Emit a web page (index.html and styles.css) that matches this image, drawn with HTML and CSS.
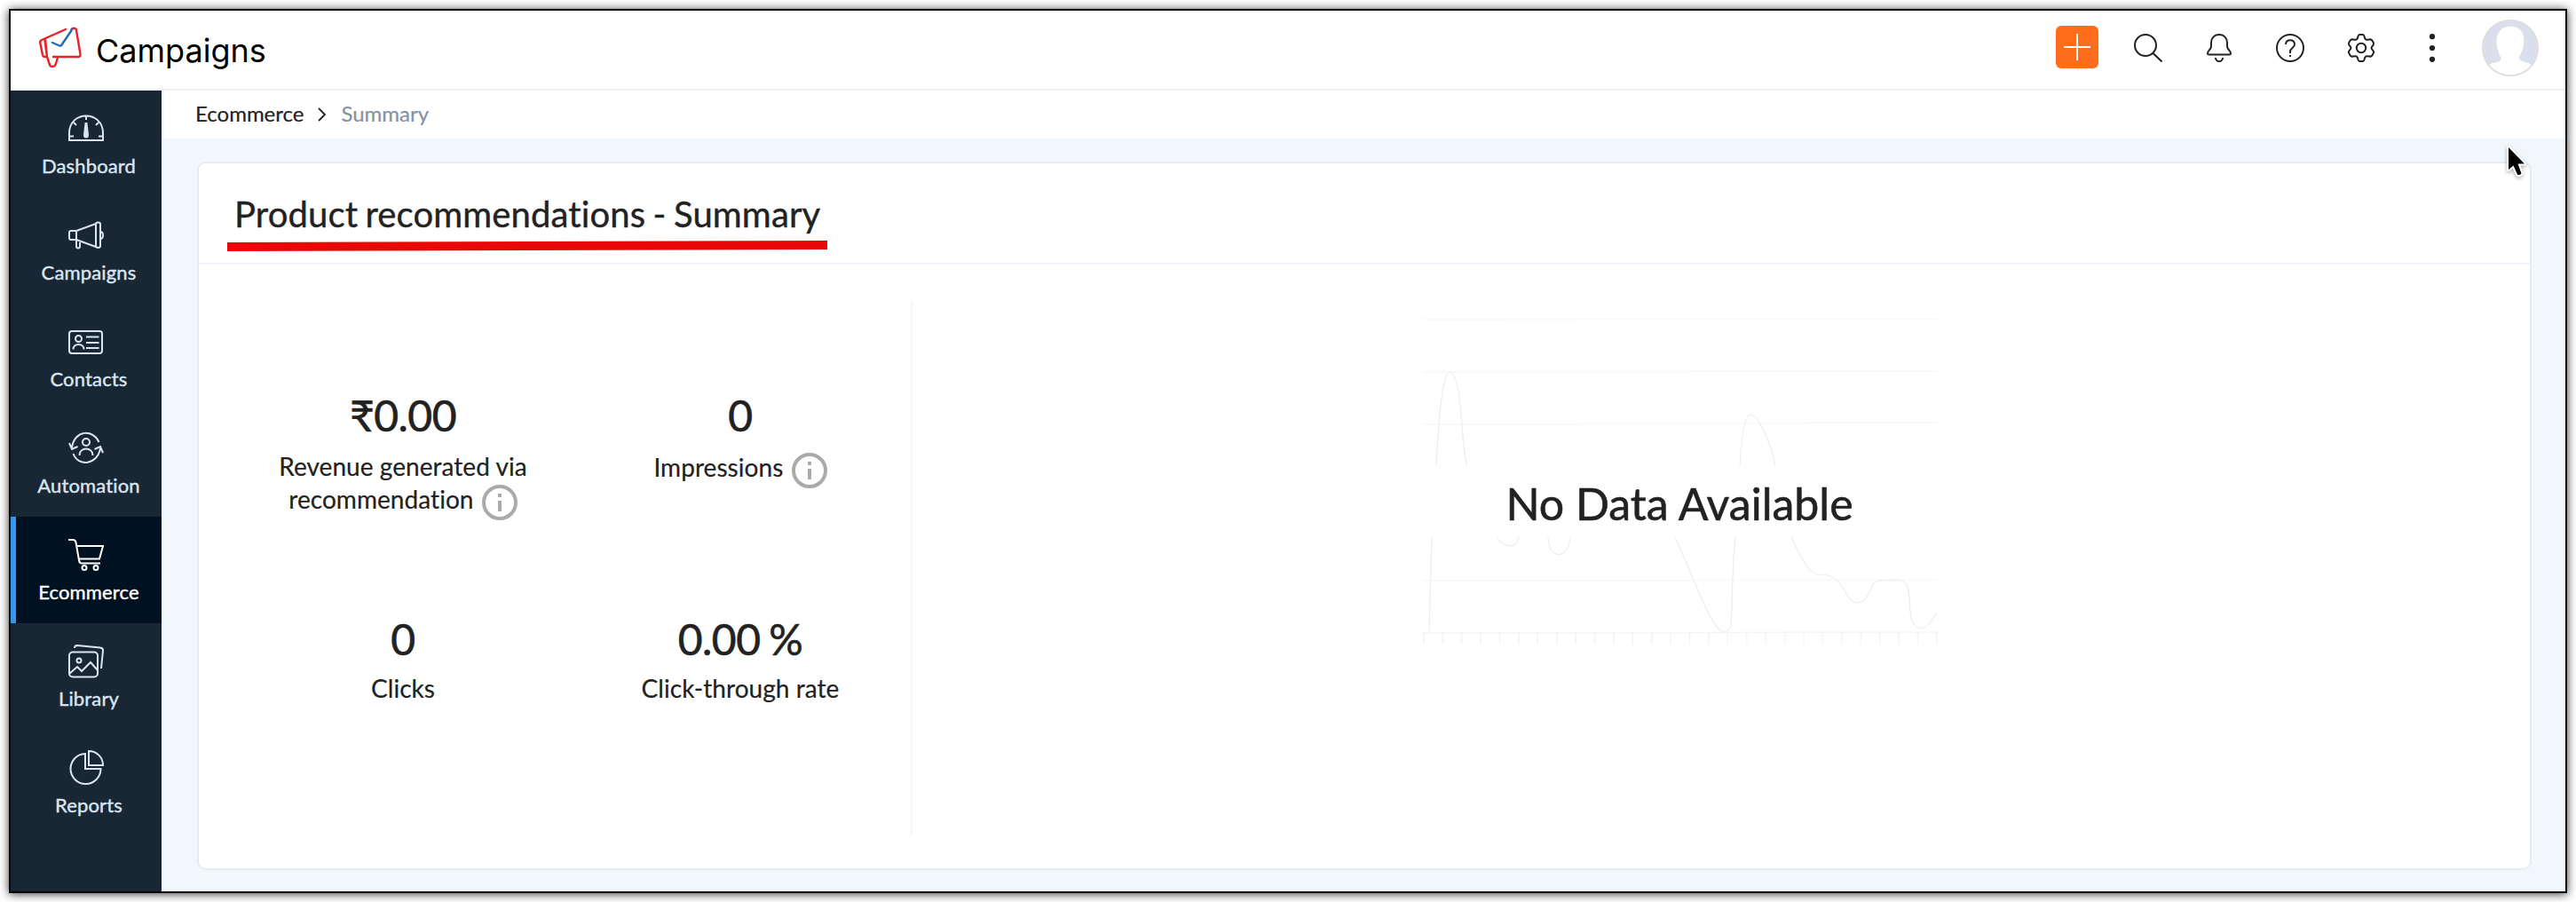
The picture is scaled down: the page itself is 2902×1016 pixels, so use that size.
FILE: index.html
```html
<!DOCTYPE html>
<html lang="en">
<head>
    <meta charset="UTF-8">
    <meta name="viewport" content="width=device-width, initial-scale=1.0">
    <title>Campaigns - Product recommendations</title>
    <link rel="stylesheet" href="styles.css">
</head>
<body>
    <div class="window">
        <header class="topbar">
            <div class="brand">
                <svg class="logo" width="50" height="48" viewBox="0 0 50 48" fill="none" stroke="#e8222b" stroke-width="2.4" stroke-linecap="round" stroke-linejoin="round">
                    <path d="M31 3L4 15Q2 16 2.200 18L5 32Q5.500 34 8 34H10L7.500 15M10 34L8 14M10 34L13 43Q13.500 45 16 45Q18.500 45 19.500 43L22 35"/>
                    <path d="M17 34H45Q48 34 47.500 31L43 4Q42.500 1.700 40 1.700Q38.500 1.700 37.500 3"/>
                    <path stroke="#226db4" d="M16 18L24 21.500Q25.500 22 26.500 20.500L38 3.500"/>
                </svg>
                <span class="brand-name">Campaigns</span>
            </div>
            <div class="tools">
                <button class="add-btn" aria-label="Add"><svg width="30" height="30" viewBox="0 0 30 30" stroke="#fff" stroke-width="2"><path d="M15 0V30M0 15H30"/></svg></button>
                <svg class="tool" viewBox="0 0 32 32"><circle cx="13" cy="13" r="12"/><path d="M21.500 22L31.500 31.500"/></svg>
                <svg class="tool" viewBox="0 0 32 32"><path d="M16 1C10.500 1 7 5 7 10V14C7 18 3 19 3 22Q3 23.500 5 23.500H27Q29 23.500 29 22C29 19 25 18 25 14V10C25 5 21.500 1 16 1ZM12 27C12 32.500 20 32.500 20 27"/></svg>
                <svg class="tool" viewBox="0 0 32 32"><circle cx="16" cy="16" r="15"/><path d="M11 12C11 5.500 21 5.500 21 12C21 16 16 16 16 20V22M16 24V26"/></svg>
                <svg class="tool" viewBox="0 0 32 32"><circle cx="16" cy="16" r="5.200"/><path d="M14 1H18Q19 1 19.500 3C20.200 6.500 21.500 7.500 25 6.500Q27.500 6 28.300 7.500L30 10.500Q30.600 12 29 13.500C27 15.500 27 16.500 29 18.500Q30.600 20 30 21.500L28.300 24.500Q27.500 26 25 25.500C21.500 24.500 20.200 25.500 19.500 29Q19 31 18 31H14Q13 31 12.500 29C11.800 25.500 10.500 24.500 7 25.500Q4.500 26 3.700 24.500L2 21.500Q1.400 20 3 18.500C5 16.500 5 15.500 3 13.500Q1.400 12 2 10.500L3.700 7.500Q4.500 6 7 6.500C10.500 7.500 11.800 6.500 12.500 3Q13 1 14 1Z"/></svg>
                <svg class="tool dots" viewBox="0 0 32 32"><circle cx="16" cy="3.200" r="3.100"/><circle cx="16" cy="16" r="3.100"/><circle cx="16" cy="28.800" r="3.100"/></svg>
                <svg class="avatar" viewBox="0 0 64 64"><circle cx="32" cy="32" r="31" fill="#dbdfeb"/><path fill="#fff" d="M8 51C14 47 21 50 21.500 44C22 42 19 40 18.500 36C15 24 16 18 21 12C26 6 41 6 45 14C48 20 48 28 45 36C44 39 42 41 42 43C43 49 51 47 56 51C45 66 19 66 8 51Z"/><circle cx="32" cy="32" r="31.200" fill="none" stroke="#dcdcdc" stroke-width="1.600"/></svg>
            </div>
        </header>

        <div class="main">
            <nav class="sidebar">
                <a class="nav-item">
                    <svg viewBox="0 0 40 40"><path d="M1 33V25C1 -1 39 -1 39 25V33ZM20 6V10M6 13L9 16M34 13L31 16M1 28.500H6M39 28.500H34"/><path class="fill" d="M19.500 14H20.500L22 27Q22 29.500 20 29.500Q18 29.500 18 27Z"/></svg>
                    <span>Dashboard</span>
                </a>
                <a class="nav-item">
                    <svg viewBox="0 0 40 40"><path d="M9 15H3Q1 15 1 17V23Q1 25 3 25H9ZM9 15L31 7M9 25L31 33M9 25V32.500Q9 34.500 11 34.500Q13 34.500 13 32.500V26M31 7.500Q31 5.500 33.500 5.500Q36 5.500 36 7.500V32Q36 34 33.500 34Q31 34 31 32ZM36 16Q39 16 39 20Q39 24 36 24"/></svg>
                    <span>Campaigns</span>
                </a>
                <a class="nav-item">
                    <svg viewBox="0 0 40 40"><rect x="1" y="8" width="37" height="25" rx="3"/><circle cx="11.500" cy="16.500" r="3.500"/><path d="M5.500 28.500C5.500 21 17.500 21 17.500 28.500M20 14.500H34.500M20 21H34.500M20 27H34.500"/></svg>
                    <span>Contacts</span>
                </a>
                <a class="nav-item">
                    <svg viewBox="0 0 40 40"><circle cx="20" cy="13" r="4"/><path d="M12.500 28C12.500 18 27.500 18 27.500 28M4 19C7 -1 28 -2 34.500 13M36 20C33 39 11 41 5.500 26M1 14L4 21L10.500 18M29.500 21L36 18L39 25"/></svg>
                    <span>Automation</span>
                </a>
                <a class="nav-item active">
                    <svg viewBox="0 0 40 40"><path d="M0 3H5Q8 3 8.500 6L12 26Q12.500 29.500 15 29.500H36M9 10H39L35 24.500H12"/><circle cx="18" cy="34.500" r="2.500"/><circle cx="31" cy="34.500" r="2.500"/></svg>
                    <span>Ecommerce</span>
                </a>
                <a class="nav-item">
                    <svg viewBox="0 0 40 40"><rect x="1" y="9.500" width="32" height="28" rx="4"/><circle cx="12" cy="19" r="2.500"/><path d="M1 34L10 26L15 31L25 21L33 30M7 5Q7 2 10 2L36 4.500Q39.300 5 39 8L37 28"/></svg>
                    <span>Library</span>
                </a>
                <a class="nav-item">
                    <svg viewBox="0 0 40 40"><path d="M19 4A17 17 0 1 0 36.500 21H19ZM23 1V17H39C39 8 32 1 23 1Z"/></svg>
                    <span>Reports</span>
                </a>
            </nav>

            <div class="content">
                <div class="breadcrumb">
                    <span>Ecommerce</span>
                    <svg width="10" height="16" viewBox="0 0 10 16"><path d="M1 1L8 8L1 15" fill="none" stroke="#222" stroke-width="1.800"/></svg>
                    <span class="current">Summary</span>
                </div>

                <div class="card">
                    <div class="card-head">
                        <h1>Product recommendations - Summary</h1>
                        <svg class="underline" width="676" height="12" viewBox="0 0 676 12"><path d="M0 2L676 0V10L0 12Z" fill="#e90808"/></svg>
                    </div>
                    <div class="card-body">
                        <div class="stats">
                            <div class="stat">
                                <div class="value">₹0.00</div>
                                <div class="label">Revenue generated via<br>recommendation <svg class="info" viewBox="0 0 40 40"><circle cx="20" cy="20" r="18"/><path d="M20 10V14M20 18V30"/></svg></div>
                            </div>
                            <div class="stat">
                                <div class="value">0</div>
                                <div class="label label-low">Impressions <svg class="info" viewBox="0 0 40 40"><circle cx="20" cy="20" r="18"/><path d="M20 10V14M20 18V30"/></svg></div>
                            </div>
                            <div class="stat">
                                <div class="value">0</div>
                                <div class="label label-high">Clicks</div>
                            </div>
                            <div class="stat">
                                <div class="value">0.00 %</div>
                                <div class="label label-high">Click-through rate</div>
                            </div>
                        </div>
                        <div class="chart">
                            <svg width="580" height="370" viewBox="0 0 580 370" fill="none">
                                <path stroke="#f8f8f8" stroke-width="1.500" d="M0 1L579 0M0 60L579 59M0 119L579 117M0 295L579 294"/>
                                <path stroke="#f5f5f5" stroke-width="1.500" d="M0 354L579 353"/>
                                <g id="ticks" stroke="#f4f4f4" stroke-width="1.500"></g>
                                <path stroke="#ededed" stroke-width="1.200" d="M7 352L10 246L15 165C18 110 22 60 30 60C38 60 42 90 44 120C46 150 48 160 50 166C56 215 70 236 83 246C93 259 105 260 108 246C115 190 138 190 141 246C141 272 164 272 166 246C175 170 250 170 284 246C300 280 310 310 324 336Q339 364 347 346C349 320 348 280 352 246L357 166C359 130 363 108 369 108C378 108 392 140 397 166C401 205 408 225 415 246C426 270 436 288 445 288C458 288 465 290 475 306C483 324 495 325 503 308C508 296 508 295 520 295C540 293 545 294 547 306C550 320 545 349 562 349Q570 347 579 331"/>
                            </svg>
                            <div class="no-data">No Data Available</div>
                        </div>
                    </div>
                </div>
            </div>
        </div>
        <svg class="cursor" width="26" height="40" viewBox="0 0 26 40"><path d="M3 3V28L8.500 23.500L13 33.500Q15 35 17.500 32.500L13.500 21.500H21Z" fill="#000" stroke="#fff" stroke-width="4" stroke-linejoin="round"/></svg>
    </div>

    <script>
        // Axis ticks
        let d = "";
        for (let i = 0; i <= 27; i++) {
            d += "M" + (1 + i * 21.4) + " 353V367";
        }
        document.getElementById("ticks").innerHTML = '<path d="' + d + '"/>';
    </script>
</body>
</html>
```
FILE: styles.css
```css
* {
    box-sizing: border-box;
}

body {
    margin: 0;
    padding: 10px;
    height: 1016px;
    background: #fff;
    font-family: Lato, "Liberation Sans", sans-serif;
    font-variant-ligatures: none;
    color: #222;
    overflow: hidden;
}

.window {
    position: relative;
    display: flex;
    flex-direction: column;
    height: 996px;
    border: 2px solid #000;
    background: #fff;
    box-shadow: 0 1px 10px rgba(0, 0, 0, 0.8);
}

.topbar {
    display: flex;
    justify-content: space-between;
    height: 90px;
    border-bottom: 2px solid #eee;
}

.brand {
    display: flex;
    padding: 18px 0 0 31px;
    gap: 15px;
}

.brand-name {
    font-family: Inter, sans-serif;
    font-size: 36px;
    line-height: 54px;
    color: #000;
}

.tools {
    display: flex;
    align-items: center;
    padding: 0 30px 4px 0;
    gap: 48px;
}

.add-btn {
    display: flex;
    align-items: center;
    justify-content: center;
    width: 48px;
    height: 48px;
    margin: 0 -8px 2px 0;
    border: none;
    border-radius: 6px;
    background: #ff6c1a;
    padding: 0;
}

.tool {
    width: 32px;
    height: 32px;
    fill: none;
    stroke: #222;
    stroke-width: 2;
    stroke-linejoin: round;
}

.dots {
    fill: #222;
    stroke: none;
}

.avatar {
    width: 64px;
    height: 64px;
    margin-left: -8px;
}

.main {
    display: flex;
    flex: 1;
}

.sidebar {
    width: 170px;
    background: #192734;
}

.nav-item {
    display: flex;
    flex-direction: column;
    align-items: center;
    height: 120px;
    padding-top: 23px;
    color: #d9e5f2;
    font-size: 22px;
    line-height: 26px;
    letter-spacing: 0.15px;
    -webkit-text-stroke: 0.4px currentColor;
}

.nav-item svg {
    width: 40px;
    height: 40px;
    margin-bottom: 9px;
    fill: none;
    stroke: currentColor;
    stroke-width: 2;
}

.nav-item span {
    padding-left: 6px;
}

.nav-item .fill {
    fill: currentColor;
}

.nav-item.active {
    background: #001122;
    box-shadow: inset 6px 0 #3399f0;
    color: #fff;
}

.content {
    flex: 1;
    border-left: 2px solid #f2f7fc;
    background: #f2f7fc;
}

.breadcrumb {
    display: flex;
    align-items: center;
    gap: 16px;
    height: 54px;
    padding: 0 0 4px 36px;
    background: #fff;
    font-size: 24px;
    -webkit-text-stroke: 0.2px currentColor;
}

.breadcrumb svg {
    margin-top: 4px;
}

.breadcrumb .current {
    color: #8492a2;
}

.card {
    width: 2630px;
    height: 798px;
    margin: 26px 0 0 38px;
    border: 2px solid #e3ecf1;
    border-radius: 10px;
    background: #fff;
}

.card-head {
    position: relative;
    height: 114px;
    padding: 33px 0 0 40px;
    border-bottom: 2px solid #f2f6fa;
}

.card-head h1 {
    margin: 0;
    font-size: 40px;
    line-height: 48px;
    font-weight: 400;
    letter-spacing: 0.13px;
    word-spacing: -2px;
    -webkit-text-stroke: 0.4px currentColor;
}

.underline {
    position: absolute;
    left: 32px;
    top: 87px;
}

.card-body {
    display: flex;
    padding-top: 40px;
}

.stats {
    display: grid;
    grid-template-columns: 380px 380px;
    grid-template-rows: 252px 1fr;
    width: 804px;
    height: 602px;
    padding: 101px 0 0 40px;
    border-right: 2px solid #f2f6fa;
}

.stat {
    text-align: center;
}

.value {
    font-size: 48px;
    line-height: 58px;
    letter-spacing: -0.5px;
    word-spacing: -2px;
    -webkit-text-stroke: 0.6px currentColor;
}

.label {
    margin-top: 10px;
    font-size: 28px;
    line-height: 37px;
    letter-spacing: 0.05px;
    -webkit-text-stroke: 0.2px currentColor;
}

.label-low {
    margin-top: 11px;
}

.label-high {
    margin-top: 8px;
}

.info {
    width: 40px;
    height: 40px;
    margin: -10px 0 -13px 2px;
    fill: none;
    stroke: #aaa;
    stroke-width: 4;
}

.chart {
    position: relative;
    flex: 1;
    padding: 21px 0 0 575px;
}

.no-data {
    position: absolute;
    left: 572px;
    top: 187px;
    width: 584px;
    padding-top: 5px;
    background: #fff;
    font-size: 50px;
    line-height: 75px;
    text-align: center;
    -webkit-text-stroke: 0.6px currentColor;
}

.cursor {
    position: absolute;
    left: 2811px;
    top: 151px;
    paint-order: stroke;
    filter: drop-shadow(0 2px 2px rgba(0, 0, 0, 0.3));
}
```
